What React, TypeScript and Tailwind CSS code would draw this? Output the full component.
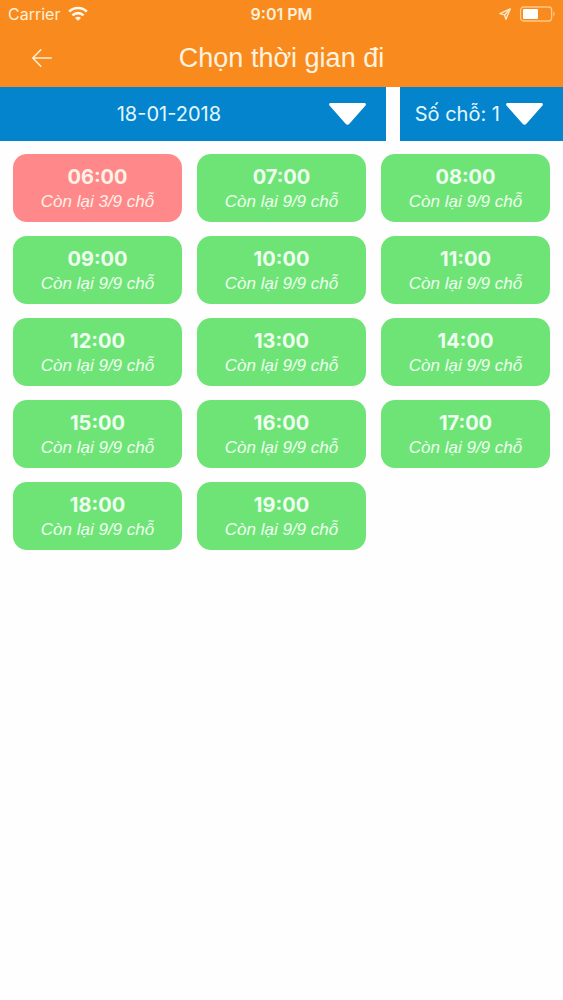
import { useState } from "react";

const slots = [
  { time: "06:00", left: 3 },
  { time: "07:00", left: 9 },
  { time: "08:00", left: 9 },
  { time: "09:00", left: 9 },
  { time: "10:00", left: 9 },
  { time: "11:00", left: 9 },
  { time: "12:00", left: 9 },
  { time: "13:00", left: 9 },
  { time: "14:00", left: 9 },
  { time: "15:00", left: 9 },
  { time: "16:00", left: 9 },
  { time: "17:00", left: 9 },
  { time: "18:00", left: 9 },
  { time: "19:00", left: 9 },
];

function StatusBar() {
  return (
    <div className="grid grid-cols-3 items-center h-7 pl-2 pr-2 text-base text-[#fff0d8]">
      <div className="flex items-center gap-2">
        <span>Carrier</span>
        <svg className="w-5 h-4" viewBox="0 0 20 16" fill="none" stroke="#fff8ec" strokeWidth="2.6">
          <path d="M1.2 5.6a12.6 12.6 0 0 1 17.6 0" />
          <path d="M4.4 9.4a8 8 0 0 1 11.2 0" />
          <path d="M10 14.8 7 11.9a4.2 4.2 0 0 1 6 0Z" fill="#fff8ec" stroke="none" />
        </svg>
      </div>
      <span className="text-center font-semibold">9:01 PM</span>
      <div className="flex items-center justify-end gap-2">
        <svg className="w-3 h-3" viewBox="0 0 12 12" fill="none" stroke="#ffe9c8" strokeWidth="1.4" strokeLinejoin="round">
          <path d="M11.2.9 6.9 11.2 5.6 6.9.9 5.6Z" />
          <path d="M11.2.9 5.6 6.9" />
        </svg>
        <svg className="w-9 h-4" viewBox="0 0 36 16" fill="none">
          <rect x="1.6" y="1" width="31" height="14" rx="3" stroke="#ffc98a" strokeWidth="1.3" />
          <rect x="4" y="3" width="15" height="10" rx="1" fill="#fff" />
          <path d="M34.4 5.6c1.6.7 1.6 4.1 0 4.8Z" fill="#ffc98a" />
        </svg>
      </div>
    </div>
  );
}

function Caret({ className }: { className: string }) {
  return (
    <svg className={`absolute top-4 w-[37px] h-[22px] pointer-events-none ${className}`} viewBox="0 0 37 22" fill="#fff">
      <path d="M1.6 0h33.8c1.4 0 2 1.5 1.1 2.6L20.4 20.8c-1 1.2-2.8 1.2-3.8 0L.5 2.6C-.4 1.5.2 0 1.6 0Z" />
    </svg>
  );
}

export default function App() {
  const [date, setDate] = useState("18-01-2018");
  const [seats, setSeats] = useState("1");

  return (
    <div className="min-h-screen bg-[#fefefe] font-['Inter',sans-serif]">
      <header className="bg-[#f98b1e]">
        <StatusBar />
        <div className="grid grid-cols-[56px_1fr_56px] items-center h-[59px]">
          <button type="button" aria-label="Quay lại" className="flex justify-end pr-1">
            <svg className="w-5 h-5" viewBox="0 0 20 20" fill="none" stroke="#fff0d8" strokeWidth="1.5" strokeLinecap="round" strokeLinejoin="round">
              <path d="M19.2 10H.8M8.8 1.8.8 10l8 8.2" />
            </svg>
          </button>
          <h1 className="text-center text-[27px] leading-9 text-[#fff4e0] font-['Liberation_Sans',sans-serif]">
            Chọn thời gian đi
          </h1>
        </div>
      </header>

      <div className="flex gap-3.5 h-[54px] text-xl text-[#e2f8ff]">
        <div className="relative flex-1 bg-[#0484cd]">
          <select
            aria-label="Ngày đi"
            value={date}
            onChange={(e) => setDate(e.target.value)}
            className="appearance-none w-full h-full pr-12 [text-align-last:center]"
          >
            <option value="18-01-2018">18-01-2018</option>
          </select>
          <Caret className="right-5" />
        </div>
        <div className="relative w-[29%] bg-[#0484cd]">
          <select
            aria-label="Số chỗ"
            value={seats}
            onChange={(e) => setSeats(e.target.value)}
            className="appearance-none w-full h-full pl-[15px]"
          >
            <option value="1">Số chỗ: 1</option>
          </select>
          <Caret className="right-5" />
        </div>
      </div>

      <main className="grid grid-cols-3 gap-x-[15px] gap-y-3.5 px-[13px] pt-[13px]">
        {slots.map((slot) => (
          <button
            key={slot.time}
            type="button"
            className={`flex flex-col items-center h-[68px] pt-2.5 rounded-[14px] ${
              slot.left < 9 ? "bg-[#ff888b] text-[#fff2e6]" : "bg-[#6ee477] text-[#effff0]"
            }`}
          >
            <span className="text-xl leading-[26px] font-bold">{slot.time}</span>
            <span className="text-[17px] leading-6 italic font-['Liberation_Sans',sans-serif]">
              Còn lại {slot.left}/9 chỗ
            </span>
          </button>
        ))}
      </main>
    </div>
  );
}
